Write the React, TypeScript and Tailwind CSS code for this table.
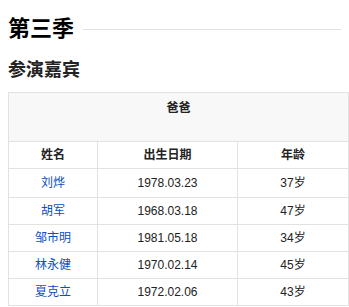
const font = { fontFamily: '"Liberation Sans", "Noto Sans CJK SC", sans-serif' };

const guests = [
  { name: "刘烨", birth: "1978.03.23", age: "37岁" },
  { name: "胡军", birth: "1968.03.18", age: "47岁" },
  { name: "邹市明", birth: "1981.05.18", age: "34岁" },
  { name: "林永健", birth: "1970.02.14", age: "45岁" },
  { name: "夏克立", birth: "1972.02.06", age: "43岁" },
];

export default function App() {
  return (
    <div className="bg-white px-2 pt-[14px] text-[#222]" style={font}>
      <div className="flex items-center gap-[9px]">
        <h2 className="text-[22px] leading-[30px] font-bold text-black">第三季</h2>
        <div className="h-px flex-1 bg-[#e2e2e2]" />
      </div>
      <h3 className="mt-[14px] text-[18px] leading-[24px] font-bold text-[#222]">参演嘉宾</h3>
      <table className="mt-[10px] w-[341px] border-collapse border border-[#e2e2e2] text-[12px]">
        <thead>
          <tr>
            <th
              colSpan={3}
              className="h-[49px] border border-[#e2e2e2] bg-[#f8f8f8] pt-[6px] align-top font-bold text-[#222]"
            >
              爸爸
            </th>
          </tr>
          <tr className="h-[27px]">
            <th className="w-[89px] border border-[#e2e2e2] font-bold">姓名</th>
            <th className="w-[140px] border border-[#e2e2e2] font-bold">出生日期</th>
            <th className="border border-[#e2e2e2] font-bold">年龄</th>
          </tr>
        </thead>
        <tbody>
          {guests.map((g, i) => (
            <tr key={g.name} className={i === 0 ? "h-[29px]" : "h-[27px]"}>
              <td className="border border-[#e2e2e2] text-center">
                <a href="#" className="text-[#0b4fc1]">
                  {g.name}
                </a>
              </td>
              <td className="border border-[#e2e2e2] text-center">{g.birth}</td>
              <td className="border border-[#e2e2e2] text-center">{g.age}</td>
            </tr>
          ))}
        </tbody>
      </table>
    </div>
  );
}
